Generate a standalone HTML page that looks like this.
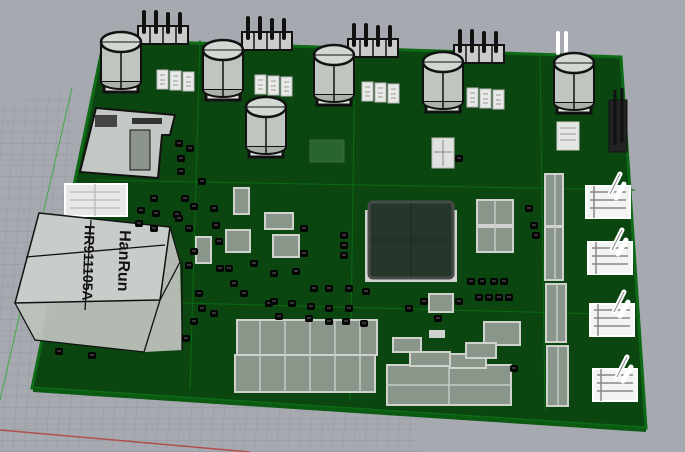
<!DOCTYPE html>
<html><head><meta charset="utf-8"><style>
html,body{margin:0;padding:0;background:#a6aab0;}
svg{display:block}
</style></head><body>
<svg width="685" height="452" viewBox="0 0 685 452" xmlns="http://www.w3.org/2000/svg" font-family="Liberation Sans, sans-serif">
<defs>
<pattern id="g" width="11" height="11" patternUnits="userSpaceOnUse" patternTransform="skewX(-4)">
<path d="M0 0H11M0 0V11" stroke="#979ba1" stroke-width="1" fill="none"/>
</pattern>
<g id="cap">
<rect x="-17" y="30" width="34" height="20" fill="#e0e3e0" stroke="#111" stroke-width="3"/>
<rect x="-20" y="0" width="40" height="40" fill="#bfc6bf" stroke="#111" stroke-width="2"/>
<path d="M-20 40 A20 7 0 0 0 20 40" fill="#aab2aa" stroke="#111" stroke-width="2"/>
<line x1="0" y1="0" x2="0" y2="46" stroke="#111" stroke-width="1.5"/>
<ellipse cx="0" cy="0" rx="20" ry="10" fill="#d2d9d2" stroke="#111" stroke-width="2.5"/>
<line x1="-20" y1="0" x2="20" y2="0" stroke="#111" stroke-width="1"/>
</g>
<g id="hdr">
<rect x="0" y="16" width="50" height="18" fill="#c9ccc9" stroke="#111" stroke-width="2"/>
<path d="M12 16V34M25 16V34M38 16V34" stroke="#111" stroke-width="1.5"/>
<path d="M6 2V22M18 2V22M30 4V22M42 4V22" stroke="#111" stroke-width="4" stroke-linecap="round"/>
</g>
<g id="trip">
<rect x="0" y="0" width="11" height="19" fill="#e8eae8" stroke="#bbb"/>
<rect x="13" y="1" width="11" height="19" fill="#e8eae8" stroke="#bbb"/>
<rect x="26" y="2" width="11" height="19" fill="#e8eae8" stroke="#bbb"/>
<path d="M3 5h5M3 10h5M3 14h5M16 6h5M16 11h5M16 15h5M29 7h5M29 12h5M29 16h5" stroke="#999"/>
</g>
<g id="wc">
<rect x="0" y="14" width="44" height="32" fill="#f2f4f2" stroke="#fff" stroke-width="2"/>
<path d="M4 20h36M4 28h36M4 36h36M8 14v32" stroke="#888" stroke-width="1.5"/>
<path d="M24 22l10-20M30 26l8-14" stroke="#fff" stroke-width="5" stroke-linecap="round"/>
<path d="M24 22l10-20" stroke="#888" stroke-width="1"/>
</g>
<g id="d"><rect x="0" y="0" width="8" height="7" rx="2" fill="#050505"/><rect x="2.5" y="2.5" width="1" height="1" fill="#ccc"/><rect x="4.5" y="2.5" width="1" height="1" fill="#ccc"/></g>
</defs>
<rect width="685" height="452" fill="#a6aab0"/>
<polygon points="0,105 75,88 75,452 0,452" fill="url(#g)"/>
<polygon points="30,330 420,360 420,452 0,452" fill="url(#g)"/>
<line x1="72" y1="88" x2="0" y2="400" stroke="#3fa84a" stroke-width="1"/>
<line x1="0" y1="430" x2="250" y2="452" stroke="#b0504a" stroke-width="1.5"/>
<!-- board -->
<polygon points="104,40 621,57 646,428 32,388" fill="#0b4611" stroke="#0e6a16" stroke-width="3"/>
<polygon points="33,388 646,428 646,432 33,392" fill="#0a5a12"/>
<path d="M95 180L635 190M70 300L640 315M355 45L350 400M200 40L190 390M540 55L545 410" stroke="#0a6914" stroke-width="1" fill="none"/>
<!-- headers -->
<use href="#hdr" x="138" y="10"/>
<use href="#hdr" x="242" y="16"/>
<use href="#hdr" x="348" y="23"/>
<use href="#hdr" x="454" y="29"/>
<g transform="translate(552,33)"><path d="M6 0V20M14 0V20" stroke="#fff" stroke-width="4" stroke-linecap="round"/></g>
<rect x="609" y="100" width="18" height="52" fill="#222" stroke="#111"/>
<path d="M615 90v55M622 88v55" stroke="#111" stroke-width="3"/>
<!-- triples -->
<use href="#trip" x="157" y="70"/>
<use href="#trip" x="255" y="75"/>
<use href="#trip" x="362" y="82"/>
<use href="#trip" x="467" y="88"/>
<rect x="557" y="122" width="22" height="28" fill="#e4e6e4" stroke="#ccc"/>
<path d="M560 128h16M560 134h16M560 140h16" stroke="#999"/>
<rect x="432" y="138" width="22" height="30" fill="#dfe2df" stroke="#bbb"/>
<path d="M443 140v26M434 152h18" stroke="#888"/>
<rect x="310" y="140" width="34" height="22" fill="#3f7a44" opacity=".6" stroke="#5a8a5a"/>
<!-- capacitors -->
<use href="#cap" x="121" y="42"/>
<use href="#cap" x="223" y="50"/>
<use href="#cap" x="334" y="55"/>
<use href="#cap" x="443" y="62"/>
<use href="#cap" x="574" y="63"/>
<use href="#cap" x="266" y="107"/>
<!-- card slot -->
<polygon points="96,108 175,115 170,135 162,135 158,178 80,172" fill="#c4c8c4" stroke="#111" stroke-width="2"/>
<rect x="95" y="115" width="22" height="12" fill="#444"/>
<rect x="130" y="130" width="20" height="40" fill="#8a948a" stroke="#111"/>
<rect x="132" y="118" width="30" height="6" fill="#333"/>
<!-- white connector -->
<rect x="65" y="184" width="62" height="32" fill="#e6e8e6" stroke="#fff" stroke-width="2"/>
<path d="M70 192h50M70 200h50M70 208h50M95 184v32" stroke="#aaa"/>
<!-- ethernet -->
<polygon points="39,213 170,227 180,262 182,350 144,352 35,340 15,303" fill="#bcc1bc" opacity=".95"/>
<polygon points="39,213 170,227 160,300 15,303" fill="#c9cdc9" stroke="#111" stroke-width="1.5"/>
<path d="M160,300 180,262 M160,300 144,352 M15,303 35,340 144,352 M170,227 180,262 M91,220 85,310 M26,257 165,245 M182,262 182,350" stroke="#111" stroke-width="1.3" fill="none"/>
<text x="0" y="0" transform="translate(120,230) rotate(92)" font-size="16" font-weight="bold" fill="#111">HanRun</text>
<text x="0" y="0" transform="translate(85,225) rotate(92)" font-size="14" font-weight="bold" fill="#111">HR911105A</text>
<!-- chip -->
<rect x="365" y="210" width="92" height="72" fill="#d0d2d0"/>
<rect x="369" y="202" width="84" height="76" rx="4" fill="#25362a" stroke="#4a4a4a" stroke-width="3"/>
<path d="M411 203v74M370 240h82" stroke="#1a2a1e"/>
<!-- right column connectors -->
<g fill="#8b968a" stroke="#cfd2cf" stroke-width="2">
<rect x="545" y="174" width="18" height="52"/><rect x="545" y="227" width="18" height="53"/>
<rect x="546" y="284" width="20" height="58"/><rect x="547" y="346" width="21" height="60"/>
<rect x="477" y="200" width="36" height="25"/><rect x="477" y="227" width="36" height="25"/>
<rect x="237" y="320" width="140" height="35"/><rect x="235" y="355" width="140" height="37"/>
<rect x="387" y="365" width="124" height="40"/>
<rect x="393" y="338" width="28" height="14"/><rect x="410" y="352" width="40" height="14"/><rect x="450" y="354" width="36" height="14"/>
<rect x="484" y="322" width="36" height="23"/><rect x="466" y="343" width="30" height="15"/>
<rect x="429" y="294" width="24" height="18"/><rect x="265" y="213" width="28" height="16"/>
<rect x="226" y="230" width="24" height="22"/><rect x="273" y="235" width="26" height="22"/>
<rect x="196" y="237" width="15" height="26"/><rect x="234" y="188" width="15" height="26"/>
</g>
<path d="M555 175v105M557 285v56M558 347v58M495 200v52M260 320v72M285 320v72M310 320v72M335 320v72M360 320v72M449 365v40M387 385h124" stroke="#c8ccc8" stroke-width="1.5"/>
<rect x="429" y="330" width="16" height="8" fill="#d0d2d0"/>
<!-- white right connectors -->
<use href="#wc" x="586" y="172"/>
<use href="#wc" x="588" y="228"/>
<use href="#wc" x="590" y="290"/>
<use href="#wc" x="593" y="355"/>
<!-- small parts -->
<g>
<use href="#d" x="175" y="140"/><use href="#d" x="186" y="145"/><use href="#d" x="177" y="155"/><use href="#d" x="177" y="168"/>
<use href="#d" x="198" y="178"/><use href="#d" x="150" y="195"/><use href="#d" x="181" y="195"/><use href="#d" x="190" y="203"/>
<use href="#d" x="137" y="207"/><use href="#d" x="152" y="210"/><use href="#d" x="173" y="211"/><use href="#d" x="210" y="205"/>
<use href="#d" x="135" y="220"/><use href="#d" x="150" y="225"/><use href="#d" x="175" y="215"/><use href="#d" x="185" y="225"/>
<use href="#d" x="212" y="222"/><use href="#d" x="215" y="238"/><use href="#d" x="190" y="248"/><use href="#d" x="185" y="262"/>
<use href="#d" x="195" y="290"/><use href="#d" x="198" y="305"/><use href="#d" x="190" y="318"/><use href="#d" x="210" y="310"/>
<use href="#d" x="216" y="265"/><use href="#d" x="225" y="265"/><use href="#d" x="250" y="260"/><use href="#d" x="265" y="300"/>
<use href="#d" x="270" y="270"/><use href="#d" x="292" y="268"/><use href="#d" x="300" y="250"/><use href="#d" x="300" y="225"/>
<use href="#d" x="310" y="285"/><use href="#d" x="325" y="285"/><use href="#d" x="345" y="285"/><use href="#d" x="362" y="288"/>
<use href="#d" x="270" y="298"/><use href="#d" x="288" y="300"/><use href="#d" x="307" y="303"/><use href="#d" x="325" y="305"/><use href="#d" x="345" y="305"/>
<use href="#d" x="275" y="313"/><use href="#d" x="305" y="315"/><use href="#d" x="325" y="318"/><use href="#d" x="342" y="318"/><use href="#d" x="360" y="320"/>
<use href="#d" x="340" y="232"/><use href="#d" x="340" y="242"/><use href="#d" x="340" y="252"/>
<use href="#d" x="525" y="205"/><use href="#d" x="530" y="222"/><use href="#d" x="532" y="232"/>
<use href="#d" x="467" y="278"/><use href="#d" x="478" y="278"/><use href="#d" x="490" y="278"/><use href="#d" x="500" y="278"/>
<use href="#d" x="475" y="294"/><use href="#d" x="485" y="294"/><use href="#d" x="495" y="294"/><use href="#d" x="505" y="294"/>
<use href="#d" x="455" y="298"/><use href="#d" x="420" y="298"/><use href="#d" x="434" y="315"/><use href="#d" x="510" y="365"/>
<use href="#d" x="455" y="155"/><use href="#d" x="55" y="348"/><use href="#d" x="88" y="352"/><use href="#d" x="182" y="335"/>
<use href="#d" x="405" y="305"/><use href="#d" x="230" y="280"/><use href="#d" x="240" y="290"/>
</g>
</svg>
</body></html>
